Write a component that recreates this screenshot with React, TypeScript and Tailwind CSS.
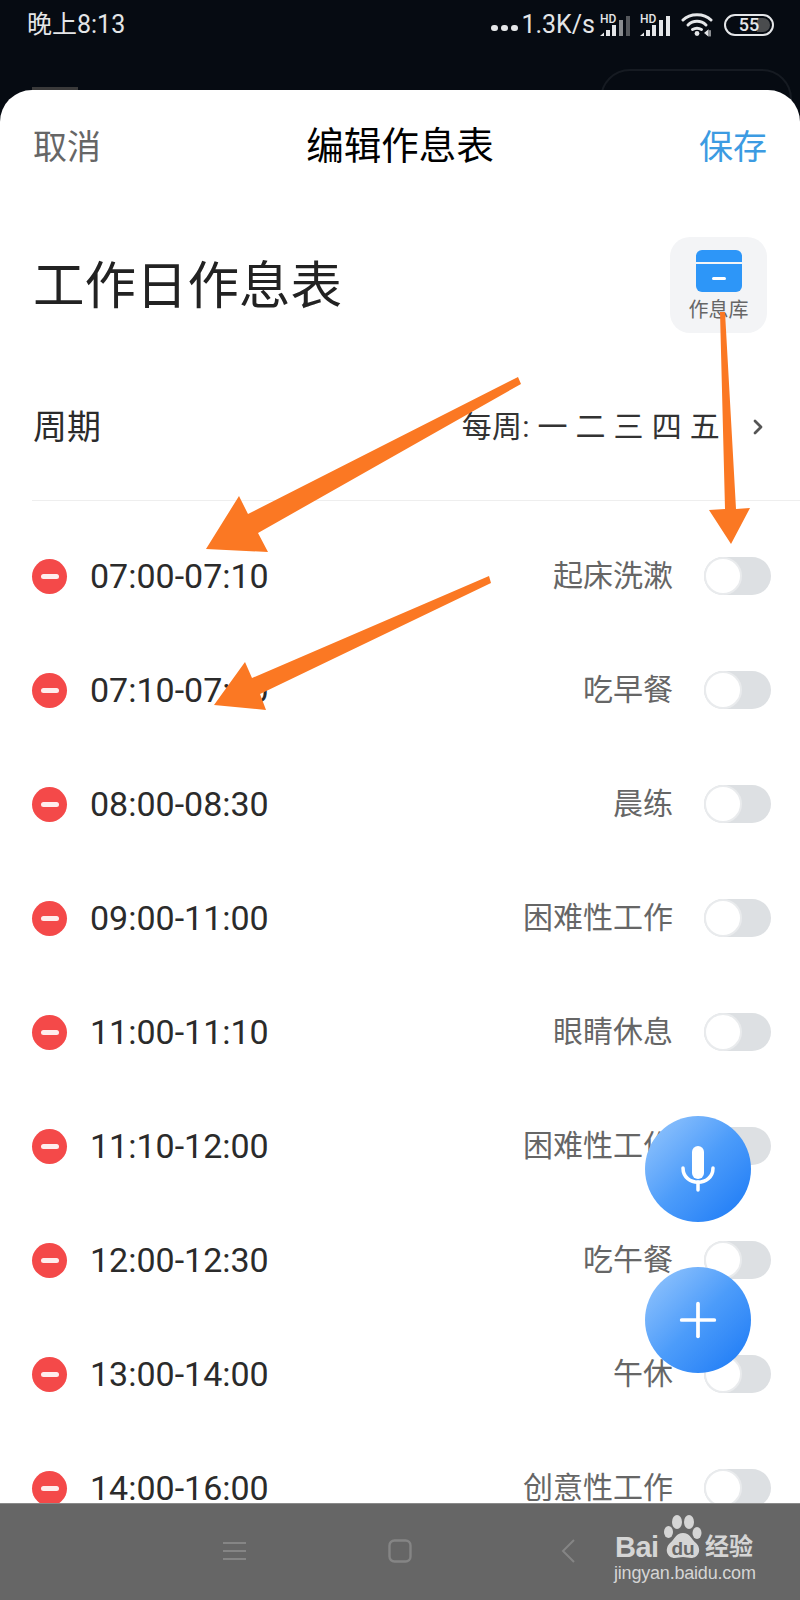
import { Plus, ChevronRight } from 'lucide-react';

const rows = [
  { time: '07:00-07:10', label: '起床洗漱' },
  { time: '07:10-07:40', label: '吃早餐' },
  { time: '08:00-08:30', label: '晨练' },
  { time: '09:00-11:00', label: '困难性工作' },
  { time: '11:00-11:10', label: '眼睛休息' },
  { time: '11:10-12:00', label: '困难性工作' },
  { time: '12:00-12:30', label: '吃午餐' },
  { time: '13:00-14:00', label: '午休' },
  { time: '14:00-16:00', label: '创意性工作' },
];

const Signal = ({ weak }: { weak?: boolean }) => (
  <svg width="30" height="24" viewBox="0 0 30 24">
    <text x="0" y="10" fontSize="12" fontFamily="Roboto, sans-serif" fontWeight="500" fill="#e4e6e8">HD</text>
    <path d="M0 23 L4 19.5 V23 Z" fill="#e4e6e8" />
    <rect x="6" y="17" width="4" height="6" fill="#e4e6e8" />
    <rect x="12" y="12" width="4" height="11" fill="#e4e6e8" />
    <rect x="19" y="7" width="4" height="16" fill={weak ? '#8a8d90' : '#e4e6e8'} />
    <rect x="26" y="3" width="4" height="20" fill={weak ? '#55585c' : '#e4e6e8'} />
  </svg>
);

const Row = ({ time, label }: { time: string; label: string }) => (
  <div className="flex h-[114px] items-center pl-[32px] pr-[29px]">
    <div className="flex h-[35px] w-[35px] shrink-0 items-center justify-center rounded-full bg-[#f44949]">
      <div className="h-[5px] w-[18px] rounded-full bg-white/90" />
    </div>
    <span className="ml-[23px] text-[34px] leading-none text-[#2b2b2b]">{time}</span>
    <span className="ml-auto text-[30px] leading-none text-[#666666]">{label}</span>
    <div className="ml-[31px] flex h-[38px] w-[67px] rounded-full bg-[#dde0e3]">
      <div className="h-[38px] w-[38px] rounded-full border-2 border-[#e9ebed] bg-white" />
    </div>
  </div>
);

export default function App() {
  return (
    <div className="relative flex h-[1600px] w-[800px] flex-col overflow-hidden bg-[#060b12] font-['Roboto','Noto_Sans_CJK_SC',sans-serif]">
      {/* Status bar */}
      <div className="relative flex h-[90px] shrink-0 items-start px-[27px] pt-[12px] text-[#e4e6e8]">
        <span className="text-[25px] leading-[26px]">晚上8:13</span>
        <div className="ml-auto mr-[-1px] flex items-center">
          <div className="flex gap-[3px]">
            <div className="mt-[6px] h-[6px] w-[7px] rounded-full bg-[#e4e6e8]" />
            <div className="mt-[6px] h-[6px] w-[7px] rounded-full bg-[#e4e6e8]" />
            <div className="mt-[6px] h-[6px] w-[7px] rounded-full bg-[#e4e6e8]" />
          </div>
          <span className="ml-[3px] text-[25px] leading-[26px]">1.3K/s</span>
          <div className="ml-[5px]"><Signal weak /></div>
          <div className="ml-[10px]"><Signal /></div>
          <svg className="ml-[11px]" width="32" height="24" viewBox="0 0 32 24" fill="none" stroke="#e4e6e8" strokeWidth="3" strokeLinecap="round">
            <path d="M2 7 C9 0 23 0 30 7" />
            <path d="M7 12 C12 7 20 7 25 12" />
            <path d="M11.5 16.5 C14 15 18 15 20.5 16.5" />
            <circle cx="16" cy="20.5" r="2.4" fill="#e4e6e8" stroke="none" />
            <path d="M24 20 L27 17.5 V22.5 Z M29 17.5 V23" fill="#e4e6e8" strokeWidth="1.2" />
          </svg>
          <div className="relative ml-[11px] flex h-[22px] w-[50px] items-center justify-center overflow-hidden rounded-full border-2 border-[#e4e6e8]">
            <div className="absolute inset-y-[2px] right-[2px] w-[13px] rounded-r-full bg-[#4a4c4e]" />
            <span className="relative text-[18px] font-medium leading-none">55</span>
          </div>
        </div>
        <div className="absolute left-[600px] top-[69px] h-[60px] w-[192px] rounded-[30px] border-2 border-[#161b22]" />
        <div className="absolute left-[32px] top-[87px] h-[3px] w-[46px] bg-[#3a3a3a]" />
      </div>

      {/* Sheet */}
      <div className="relative min-h-0 flex-1 overflow-hidden rounded-t-[32px] bg-white">
        <div className="relative flex h-[114px] items-center justify-between pl-[33px] pr-[33px]">
          <span className="text-[34px] leading-none text-[#666666]">取消</span>
          <span className="text-[37.5px] leading-none text-black">编辑作息表</span>
          <span className="text-[34px] leading-none text-[#3c9be2]">保存</span>
        </div>

        <div className="flex items-center justify-between pl-[33px] pr-[33px] pt-[33px]">
          <h1 className="mb-[-3px] text-[51.5px] font-normal leading-none text-[#222222]">工作日作息表</h1>
          <div className="flex h-[96px] w-[97px] flex-col items-center rounded-[20px] bg-[#f3f4f6] pt-[13px]">
            <svg width="46" height="42" viewBox="0 0 46 42">
              <path d="M0 12 V6 a6 6 0 0 1 6 -6 H40 a6 6 0 0 1 6 6 V12 Z" fill="#2d96f8" />
              <path d="M0 14 H46 V36 a6 6 0 0 1 -6 6 H6 a6 6 0 0 1 -6 -6 Z" fill="#2d96f8" />
              <rect x="16" y="27" width="14" height="3" rx="1.5" fill="white" />
            </svg>
            <span className="mt-[8px] text-[20px] leading-none text-[#666666]">作息库</span>
          </div>
        </div>

        <div className="ml-[32px] mt-[20px] flex h-[148px] items-center border-b border-[#eeeeee] pr-[30px]">
          <span className="ml-[1px] text-[34px] leading-none text-[#2b2b2b]">周期</span>
          <span className="ml-auto text-[30px] leading-none tracking-[0.3px] text-[#333333]">每周: 一 二 三 四 五</span>
          <ChevronRight className="ml-[26px] h-[24px] w-[24px] text-[#555555]" strokeWidth={2.8} />
        </div>

        <div className="pt-[18px]">
          {rows.map((r) => (
            <Row key={r.time} time={r.time} label={r.label} />
          ))}
        </div>

        {/* Floating buttons */}
        <div className="absolute left-[645px] top-[1026px] flex h-[106px] w-[106px] items-center justify-center rounded-full bg-gradient-to-br from-[#98c8fc] via-[#4c9cfa] to-[#1377f5]">
          <svg width="34" height="46" viewBox="0 0 34 46" fill="none" stroke="white" strokeWidth="3.5" strokeLinecap="round">
            <rect x="11" y="0" width="12" height="33" rx="6" fill="white" stroke="none" />
            <path d="M2 22 C2 41 32 41 32 22" />
            <path d="M17 36 V44" />
          </svg>
        </div>
        <div className="absolute left-[645px] top-[1177px] flex h-[106px] w-[106px] items-center justify-center rounded-full bg-gradient-to-br from-[#98c8fc] via-[#4c9cfa] to-[#1377f5]">
          <Plus className="h-[56px] w-[56px] text-white" strokeWidth={1.6} />
        </div>
      </div>

      {/* Nav bar */}
      <div className="flex h-[97px] shrink-0 items-center border-t border-[#8a8a8a] bg-[#666666] pl-[223px] pb-[3px]">
        <svg width="23" height="20" viewBox="0 0 23 20" stroke="#858585" strokeWidth="2">
          <path d="M0 2 H23 M0 10 H23 M0 18 H23" />
        </svg>
        <svg className="ml-[142px]" width="24" height="24" viewBox="0 0 24 24" fill="none" stroke="#858585" strokeWidth="2.4">
          <rect x="1.5" y="1.5" width="21" height="21" rx="5" />
        </svg>
        <svg className="ml-[149px]" width="14" height="24" viewBox="0 0 14 24" fill="none" stroke="#858585" strokeWidth="2">
          <path d="M13 1 L2 12 L13 23" />
        </svg>
      </div>

      {/* Baidu watermark */}
      <div className="absolute left-[614px] top-[1514px] w-[145px] font-['Liberation_Sans','Noto_Sans_CJK_SC',sans-serif] text-[#d5d5d5]">
        <div className="relative h-[47px]">
          <span className="absolute bottom-[-1px] left-[1px] text-[29px] font-bold leading-none tracking-[-0.5px]">Bai</span>
          <svg className="absolute left-[50px] top-0" width="38" height="46" viewBox="0 0 38 46" fill="#d5d5d5">
            <ellipse cx="4.5" cy="18" rx="4.5" ry="6" />
            <ellipse cx="13" cy="8" rx="5" ry="7" />
            <ellipse cx="25" cy="8" rx="5" ry="7" />
            <ellipse cx="33" cy="19" rx="4.5" ry="6" />
            <path d="M19 19 C26 19 27 25 32 29 C38 35 35 44 27 44 C24 44 22 43 19 43 C16 43 14 44 11 44 C3 44 0 35 6 29 C11 25 12 19 19 19 Z" />
            <text x="19" y="41" fontSize="19" fontWeight="700" textAnchor="middle" fill="#666666" fontFamily="Liberation Sans, sans-serif">du</text>
          </svg>
          <span className="absolute bottom-[2px] left-[91px] text-[24px] font-bold leading-none">经验</span>
        </div>
        <div className="mt-[3px] text-[18px] leading-none tracking-[-0.2px]">jingyan.baidu.com</div>
      </div>

      {/* Annotation arrows */}
      <svg className="pointer-events-none absolute left-0 top-0" width="800" height="1600" fill="#fb7823">
        <polygon points="518,377 521,384 258,533 268,552 206,549 239,496 248,514" />
        <polygon points="489,576 491,583 260,694 266,710 214,705 245,662 252,678" />
        <polygon points="720,312 725,312 736,509 750,508 731,544 709,510 725,509" />
      </svg>
    </div>
  );
}
